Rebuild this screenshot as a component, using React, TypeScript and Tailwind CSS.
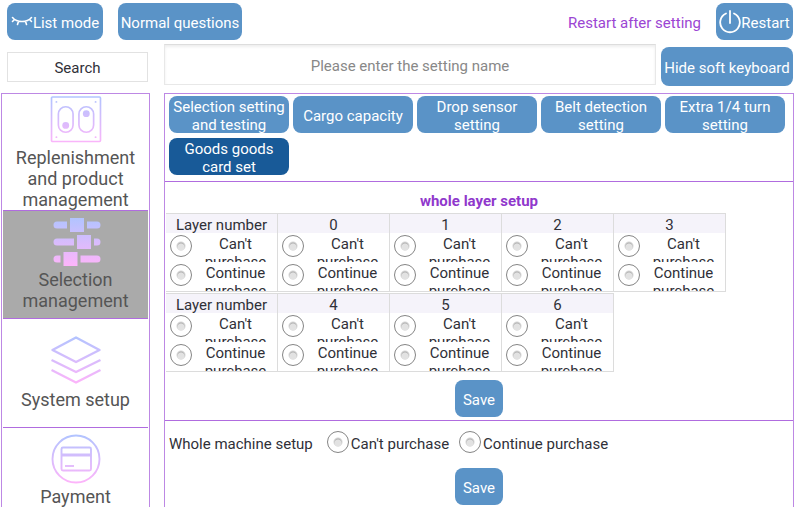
import React from "react";

const blueButton =
  "flex shrink-0 items-center justify-center rounded-lg bg-[#5a93c7] pt-0.5 text-center text-[15px] leading-[18px] text-white";

const radioClass =
  "m-0 size-[22px] shrink-0 appearance-none rounded-full border border-[#858585] bg-[radial-gradient(circle_at_50%_55%,#e2e2e2_3px,transparent_4px),radial-gradient(circle_at_center,#b0b0b0_3px,#ffffff_5px)] checked:border-[#185a98]";

function Gradient({ id }: { id: string }) {
  return (
    <defs>
      <linearGradient id={id} gradientUnits="userSpaceOnUse" x1="0" y1="0" x2="0" y2="50">
        <stop offset="0" stopColor="#b0c4ff" />
        <stop offset="1" stopColor="#ffb4fa" />
      </linearGradient>
    </defs>
  );
}

function MachineIcon() {
  return (
    <svg viewBox="0 0 52 48" className="h-12 w-[52px]" fill="none" stroke="url(#machine)" strokeWidth="1.7" aria-hidden="true">
      <Gradient id="machine" />
      <rect x="1" y="1" width="50" height="45.5" rx="1" />
      <rect x="8" y="11" width="15" height="26" rx="7.5" />
      <rect x="29" y="11" width="15" height="26" rx="7.5" />
      <g fill="url(#machine)" stroke="none">
        <circle cx="15.5" cy="30" r="3.5" />
        <circle cx="36.5" cy="18" r="3.5" />
        <circle cx="6" cy="6" r="1" />
        <circle cx="46" cy="6" r="1" />
        <circle cx="6" cy="42" r="1" />
        <circle cx="46" cy="42" r="1" />
      </g>
    </svg>
  );
}

function SlidersIcon() {
  return (
    <svg viewBox="-1 0 50 50" className="size-[50px]" fill="url(#sliders)" aria-hidden="true">
      <Gradient id="sliders" />
      <rect x="18" y="1" width="14" height="14" />
      <path d="M5 4.500H15V11.500H5a3.500 3.500 0 0 1 0-7ZM35 4.500H45a3.500 3.500 0 0 1 0 7H35Z" />
      <rect x="25" y="18" width="14" height="14" />
      <path d="M5 21.500H22V28.500H5a3.500 3.500 0 0 1 0-7ZM42 21.500H45a3.500 3.500 0 0 1 0 7H42Z" />
      <rect x="11.500" y="35" width="14" height="14" />
      <path d="M5 38.500H8.500V45.500H5a3.500 3.500 0 0 1 0-7ZM28.500 38.500H45a3.500 3.500 0 0 1 0 7H28.500Z" />
    </svg>
  );
}

function LayersIcon() {
  return (
    <svg viewBox="0 0 50 50" className="size-[50px]" fill="none" stroke="url(#layers)" strokeWidth="2.4" strokeLinejoin="round" aria-hidden="true">
      <Gradient id="layers" />
      <path d="M25 2.500 48.500 15 25 27 1.500 15Z" />
      <path d="M.5 25 25 37 49.500 25" />
      <path d="M.5 35 25 47.500 49.500 35" />
    </svg>
  );
}

function CardIcon() {
  return (
    <svg viewBox="0 0 50 50" className="size-[50px]" fill="none" stroke="url(#card)" strokeWidth="1.900" aria-hidden="true">
      <Gradient id="card" />
      <circle cx="25" cy="25" r="23.500" />
      <rect x="10.500" y="13.500" width="29.500" height="23" rx="1.500" />
      <path d="M10 21H40" strokeWidth="3" />
      <path d="M14 32H23" />
    </svg>
  );
}

function ClosedEyeIcon() {
  return (
    <svg viewBox="0 0 22 10" className="mb-1 h-2.5 w-[22px]" fill="none" stroke="currentColor" strokeWidth="1.6" strokeLinecap="round" aria-hidden="true">
      <path d="M1.500 1.500C4 4.500 7.500 5.500 11 5.500S18 4.500 20.500 1.500M3.500 3.500 1.500 5.500M7.500 5.200 6.500 8.500M14.500 5.200 15.500 8.500M18.500 3.500 20.500 5.500" />
    </svg>
  );
}

function PowerIcon() {
  return (
    <svg viewBox="0 0 22 24" className="mb-0.5 h-6 w-[22px]" fill="none" stroke="currentColor" strokeWidth="1.8" strokeLinecap="round" aria-hidden="true">
      <path d="M11 1V13M7 3.500A9.800 9.800 0 1 0 15 3.500" />
    </svg>
  );
}

const menu = [
  { label: "Replenishment and product management", icon: <MachineIcon />, box: "h-[117px] pt-0.5", gap: "mt-1" },
  { label: "Selection management", icon: <SlidersIcon />, box: "h-[108px] bg-[#aaaaaa] pt-1.5", gap: "mt-0.5" },
  { label: "System setup", icon: <LayersIcon />, box: "h-[109px] pt-4", gap: "mt-1" },
  { label: "Payment", icon: <CardIcon />, box: "h-[109px] pt-1.5", gap: "mt-0.5" },
];

const tabs = [
  "Selection setting and testing",
  "Cargo capacity",
  "Drop sensor setting",
  "Belt detection setting",
  "Extra 1/4 turn setting",
  "Goods goods card set",
];

function LayerTable({ group, columns }: { group: string; columns: string[] }) {
  return (
    <table className="table-fixed border-separate border-spacing-0 text-[15px] leading-[18px]">
      <thead>
        <tr>
          {columns.map((name) => (
            <th key={name} scope="col" className="h-5 w-28 border-t border-r border-[#dcdcdc] bg-[#f5f3fa] p-0 text-center font-normal">
              <span className="block h-[19px] overflow-hidden pt-0.5">{name}</span>
            </th>
          ))}
        </tr>
      </thead>
      <tbody>
        <tr>
          {columns.map((name) => (
            <td key={name} className="w-28 border-r border-b border-[#dcdcdc] p-0">
              {["Can't purchase", "Continue purchase"].map((choice) => (
                <label key={choice} className="flex h-[29px] overflow-hidden pt-0.5 pl-1">
                  <input type="radio" name={`${group}-${name}`} className={radioClass} />
                  <span className="flex-1 pr-1.5 pl-2 text-center">{choice}</span>
                </label>
              ))}
            </td>
          ))}
        </tr>
      </tbody>
    </table>
  );
}

export default function App() {
  return (
    <div className="flex h-screen flex-col overflow-hidden bg-white font-[Roboto,'Liberation_Sans',sans-serif] text-[15px] leading-[18px] text-[#303038]">
      <header className="flex shrink-0 items-center pt-[3px] pr-[7px] pl-[7px]">
        <button className={`${blueButton} h-[37px] w-24`}>
          <ClosedEyeIcon />
          List mode
        </button>
        <button className={`${blueButton} ml-[15px] h-[37px] w-[124px]`}>Normal questions</button>
        <span className="ml-auto pt-0.5 text-[#9b45d3]">Restart after setting</span>
        <button className={`${blueButton} ml-[15px] h-[37px] w-[77px]`}>
          <PowerIcon />
          Restart
        </button>
      </header>

      <div className="flex shrink-0 items-start pt-1 pr-[7px] pl-[7px]">
        <button className="mt-2 h-[30px] w-[141px] border border-[#e2e2e2] pt-0.5 text-center">Search</button>
        <input
          type="text"
          aria-label="Setting name"
          placeholder="Please enter the setting name"
          className="ml-4 h-[41px] min-w-0 flex-1 border border-[#e8e8e8] border-t-[#dddddd] pt-0.5 text-center shadow-[inset_0_2px_3px_#eeeeee] outline-none placeholder:text-[#888888]"
        />
        <button className={`${blueButton} mt-[3px] ml-[5px] h-[39px] w-[132px]`}>Hide soft keyboard</button>
      </div>

      <div className="flex min-h-0 flex-1 gap-3.5 pt-[7px] pr-1.5 pl-px">
        <nav className="w-[149px] shrink-0 overflow-hidden border border-b-0 border-[#bd88e4] px-px">
          {menu.map((item) => (
            <button
              key={item.label}
              className={`flex w-full flex-col items-center border-b border-[#b06cdf] text-[18px] leading-[21px] text-[#555555] ${item.box}`}
            >
              {item.icon}
              <span className={`px-2 text-center ${item.gap}`}>{item.label}</span>
            </button>
          ))}
        </nav>

        <main className="min-w-0 flex-1 overflow-hidden border border-b-0 border-[#bd88e4]">
          <div className="flex flex-wrap gap-x-1 gap-y-[5px] border-b border-[#b06cdf] px-1 pt-0.5 pb-1.5">
            {tabs.map((tab, i) => (
              <button
                key={tab}
                className={`${blueButton} h-[37px] w-[120px] px-0.5 ${i === 5 ? "bg-[#185a98]!" : ""}`}
              >
                {tab}
              </button>
            ))}
          </div>

          <section className="border-b border-[#b06cdf] pt-2.5 pb-[3px]">
            <h2 className="text-center font-bold text-[#9038cc]">whole layer setup</h2>
            <div className="flex flex-col items-start gap-px pt-[3px] pl-px">
              <LayerTable group="upper" columns={["Layer number", "0", "1", "2", "3"]} />
              <LayerTable group="lower" columns={["Layer number", "4", "5", "6"]} />
            </div>
            <button className={`${blueButton} mx-auto mt-2 h-[37px] w-12`}>Save</button>
          </section>

          <section>
            <div className="flex items-center px-1 pt-2.5">
              <span className="pt-1">Whole machine setup</span>
              <label className="ml-3.5 flex items-center gap-0.5">
                <input type="radio" name="machine" className={radioClass} />
                <span className="pt-1">Can't purchase</span>
              </label>
              <label className="ml-2.5 flex items-center gap-0.5">
                <input type="radio" name="machine" className={radioClass} />
                <span className="pt-1">Continue purchase</span>
              </label>
            </div>
            <button className={`${blueButton} mx-auto mt-[15px] h-[37px] w-12`}>Save</button>
          </section>
        </main>
      </div>
    </div>
  );
}
